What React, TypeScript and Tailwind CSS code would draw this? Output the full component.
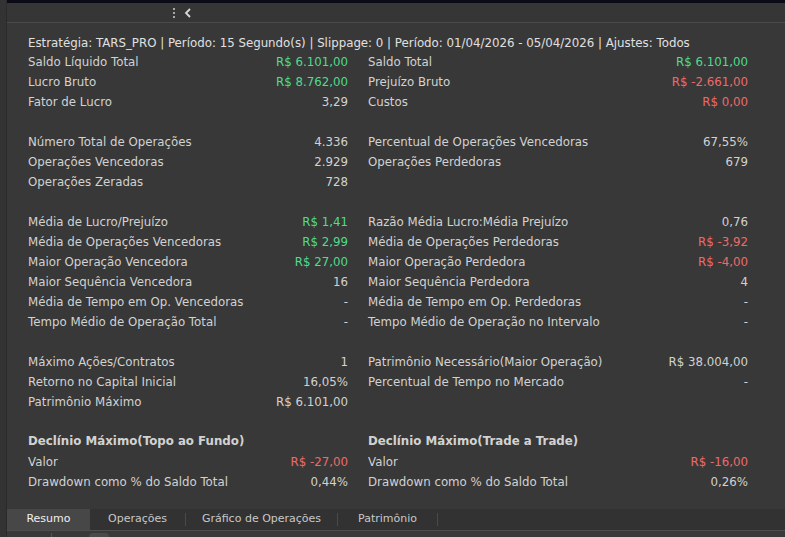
import React from "react";

type Cell = { l: string; v: string; c?: "g" | "r" | "n" } | null;

const rows: [Cell, Cell][] = [
  [{ l: "Saldo Líquido Total", v: "R$ 6.101,00", c: "g" }, { l: "Saldo Total", v: "R$ 6.101,00", c: "g" }],
  [{ l: "Lucro Bruto", v: "R$ 8.762,00", c: "g" }, { l: "Prejuízo Bruto", v: "R$ -2.661,00", c: "r" }],
  [{ l: "Fator de Lucro", v: "3,29" }, { l: "Custos", v: "R$ 0,00", c: "r" }],
];
const rows2: [Cell, Cell][] = [
  [{ l: "Número Total de Operações", v: "4.336" }, { l: "Percentual de Operações Vencedoras", v: "67,55%" }],
  [{ l: "Operações Vencedoras", v: "2.929" }, { l: "Operações Perdedoras", v: "679" }],
  [{ l: "Operações Zeradas", v: "728" }, null],
];
const rows3: [Cell, Cell][] = [
  [{ l: "Média de Lucro/Prejuízo", v: "R$ 1,41", c: "g" }, { l: "Razão Média Lucro:Média Prejuízo", v: "0,76" }],
  [{ l: "Média de Operações Vencedoras", v: "R$ 2,99", c: "g" }, { l: "Média de Operações Perdedoras", v: "R$ -3,92", c: "r" }],
  [{ l: "Maior Operação Vencedora", v: "R$ 27,00", c: "g" }, { l: "Maior Operação Perdedora", v: "R$ -4,00", c: "r" }],
  [{ l: "Maior Sequência Vencedora", v: "16" }, { l: "Maior Sequência Perdedora", v: "4" }],
  [{ l: "Média de Tempo em Op. Vencedoras", v: "-" }, { l: "Média de Tempo em Op. Perdedoras", v: "-" }],
  [{ l: "Tempo Médio de Operação Total", v: "-" }, { l: "Tempo Médio de Operação no Intervalo", v: "-" }],
];
const rows4: [Cell, Cell][] = [
  [{ l: "Máximo Ações/Contratos", v: "1" }, { l: "Patrimônio Necessário(Maior Operação)", v: "R$ 38.004,00" }],
  [{ l: "Retorno no Capital Inicial", v: "16,05%" }, { l: "Percentual de Tempo no Mercado", v: "-" }],
  [{ l: "Patrimônio Máximo", v: "R$ 6.101,00" }, null],
];
const rows5: [Cell, Cell][] = [
  [{ l: "Valor", v: "R$ -27,00", c: "r" }, { l: "Valor", v: "R$ -16,00", c: "r" }],
  [{ l: "Drawdown como % do Saldo Total", v: "0,44%" }, { l: "Drawdown como % do Saldo Total", v: "0,26%" }],
];

function C({ cell }: { cell: Cell }) {
  if (!cell) return <div className="h-[20px]" />;
  const col = cell.c === "g" ? "text-[#4fdc8c]" : cell.c === "r" ? "text-[#ee6a6a]" : "text-[#d2d2d2]";
  return (
    <div className="flex h-[20px] items-center justify-between">
      <span>{cell.l}</span>
      <span className={col}>{cell.v}</span>
    </div>
  );
}

function Block({ data }: { data: [Cell, Cell][] }) {
  return (
    <div className="grid grid-cols-[320px_380px] gap-x-[20px]">
      {data.map((r, i) => (
        <React.Fragment key={i}>
          <C cell={r[0]} />
          <C cell={r[1]} />
        </React.Fragment>
      ))}
    </div>
  );
}

export default function App() {
  return (
    <div
      className="flex h-[537px] w-[785px] overflow-hidden bg-[#383838] text-[11.8px] text-[#d2d2d2]"
      style={{ fontFamily: "'DejaVu Sans', Verdana, sans-serif" }}
    >
      <div className="flex h-full w-[7px] flex-col bg-[#333333]">
        <div className="flex-1 border-r border-[#2a2a2a]" />
      </div>
      <div className="flex flex-1 flex-col">
        <div className="h-[3px] bg-[#0b0b17]" />
        <div className="flex h-[20px] items-center border-b border-[#4a4a4a] bg-[#363636]">
          <div className="ml-[165px] flex items-center gap-[8px] text-[#bdbdbd]">
            <svg width="4" height="12" viewBox="0 0 4 12">
              <rect x="1" y="1" width="2" height="2" fill="#a8a8a8" />
              <rect x="1" y="5" width="2" height="2" fill="#a8a8a8" />
              <rect x="1" y="9" width="2" height="2" fill="#a8a8a8" />
            </svg>
            <svg width="8" height="10" viewBox="0 0 8 10">
              <path d="M6 1 L2 5 L6 9" stroke="#d8d8d8" strokeWidth="1.8" fill="none" />
            </svg>
          </div>
        </div>
        <div className="flex-1 pl-[21px] pt-[11px]">
          <div className="flex h-[19px] items-center text-[#e0e0e0]">
            Estratégia: TARS_PRO | Período: 15 Segundo(s) | Slippage: 0 | Período: 01/04/2026 - 05/04/2026 | Ajustes: Todos
          </div>
          <Block data={rows} />
          <div className="h-[20px]" />
          <Block data={rows2} />
          <div className="h-[20px]" />
          <Block data={rows3} />
          <div className="h-[20px]" />
          <Block data={rows4} />
          <div className="h-[20px]" />
          <div className="grid grid-cols-[320px_380px] gap-x-[20px] font-bold">
            <div className="flex h-[18px] items-center">Declínio Máximo(Topo ao Fundo)</div>
            <div className="flex h-[18px] items-center">Declínio Máximo(Trade a Trade)</div>
          </div>
          <div className="h-[2px]" />
          <Block data={rows5} />
        </div>
        <div className="flex h-[21px] items-stretch bg-[#323232] text-[11px] text-[#c8c8c8]">
          <div className="flex w-[83px] items-center justify-center bg-[#474747] text-[#f0f0f0]">Resumo</div>
          <div className="my-[4px] flex w-[96px] items-center justify-center border-r border-[#4a4a4a]">Operações</div>
          <div className="my-[4px] flex w-[152px] items-center justify-center border-r border-[#4a4a4a]">Gráfico de Operações</div>
          <div className="my-[4px] flex w-[100px] items-center justify-center border-r border-[#4a4a4a]">Patrimônio</div>
        </div>
        <div className="relative h-[7px] border-t border-[#4e4e4e] bg-[#393939]">
          <div className="absolute left-[44px] top-[2px] h-[5px] w-px bg-[#555]" />
          <div className="absolute left-[82px] top-[2px] h-[6px] w-[20px] rounded-t-[4px] bg-[#4a4a4a]" />
        </div>
      </div>
    </div>
  );
}
